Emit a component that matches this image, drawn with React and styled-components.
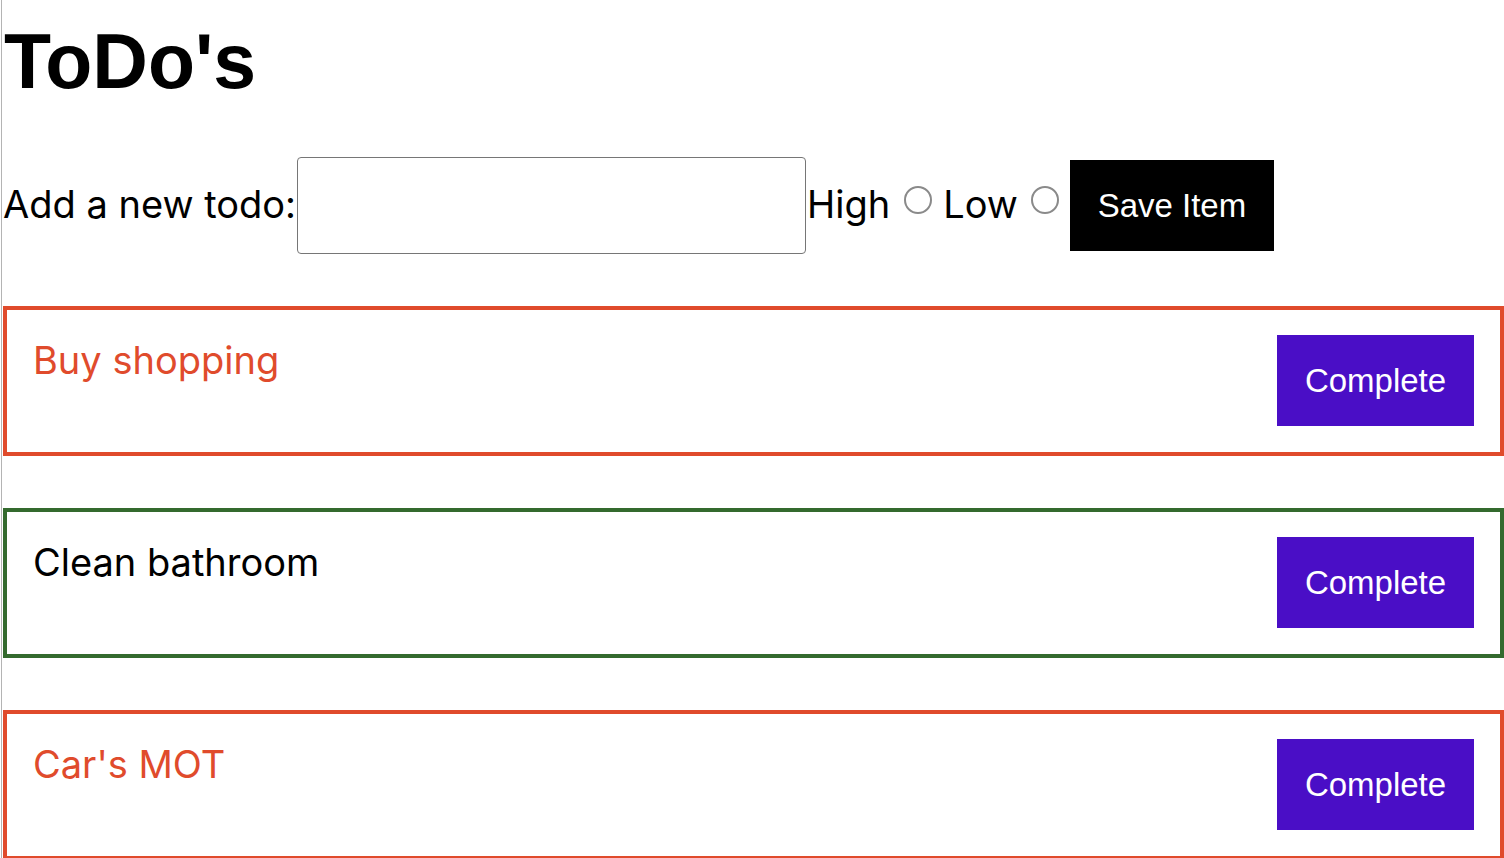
import React, { useState } from "react";
import styled, { createGlobalStyle } from "styled-components";

const GlobalStyle = createGlobalStyle`
  html, body {
    margin: 0;
    padding: 0;
    background: #ffffff;
  }
  body {
    font-family: Inter, "Noto Sans", sans-serif;
    color: #000000;
    overflow: hidden;
  }
`;

const Page = styled.div`
  min-height: 858px;
  margin-left: 1px;
  border-left: 1px solid #b4b4b4;
  padding-left: 1px;
  display: flex;
  flex-direction: column;
`;

const Title = styled.h1`
  margin: 16px 0 0 0;
  height: 90px;
  line-height: 90px;
  padding-left: 1px;
  font-family: "Liberation Sans", Arial, sans-serif;
  font-weight: 700;
  font-size: 77px;
`;

const Form = styled.form`
  display: flex;
  align-items: center;
  margin-top: 51px;
  height: 97px;
`;

const Label = styled.label`
  font-size: 38px;
  line-height: 1;
  margin-top: -4px;
`;

const TextInput = styled.input`
  box-sizing: border-box;
  width: 509px;
  height: 97px;
  margin: 0 1px;
  border: 1px solid #767676;
  border-radius: 4px;
  font-size: 32px;
  padding: 0 10px;
  outline: none;
`;

const Radio = styled.input.attrs({ type: "radio" })`
  appearance: none;
  box-sizing: border-box;
  width: 28px;
  height: 28px;
  margin: 29px ${(p) => p.$after}px 0 ${(p) => p.$before}px;
  align-self: flex-start;
  border: 2px solid #8a8a8a;
  border-radius: 50%;
  background: #ffffff;
`;

const SaveButton = styled.button`
  width: 204px;
  height: 91px;
  border: none;
  background: #000000;
  color: #ffffff;
  font-family: "Liberation Sans", Arial, sans-serif;
  font-size: 33px;
  padding: 0;
`;

const List = styled.div`
  display: flex;
  flex-direction: column;
  gap: 52px;
  margin-top: 52px;
`;

const Card = styled.div`
  box-sizing: border-box;
  height: 150px;
  border: 4px solid ${(p) => p.$border};
  padding: 25px 26px;
  display: flex;
  justify-content: space-between;
  align-items: flex-start;
`;

const ItemText = styled.span`
  font-size: 38px;
  color: ${(p) => p.$color};
  line-height: 50px;
`;

const CompleteButton = styled.button`
  width: 197px;
  height: 91px;
  border: none;
  background: #4a0ec6;
  color: #ffffff;
  font-family: "Liberation Sans", Arial, sans-serif;
  font-size: 33px;
  padding: 0;
`;

const todos = [
  { id: 1, text: "Buy shopping", priority: "high" },
  { id: 2, text: "Clean bathroom", priority: "low" },
  { id: 3, text: "Car's MOT", priority: "high" },
];

const priorityStyle = {
  high: { border: "#e04b2c", color: "#e04b2c" },
  low: { border: "#346a2e", color: "#000000" },
};

export default function App() {
  const [value, setValue] = useState("");

  return (
    <>
      <GlobalStyle />
      <Page>
        <Title>ToDo's</Title>
        <Form onSubmit={(e) => e.preventDefault()}>
          <Label htmlFor="todo">Add a new todo:</Label>
          <TextInput id="todo" value={value} onChange={(e) => setValue(e.target.value)} />
          <Label>High</Label>
          <Radio name="priority" value="high" $before={14} $after={11} />
          <Label>Low</Label>
          <Radio name="priority" value="low" $before={13} $after={11} />
          <SaveButton type="submit">Save Item</SaveButton>
        </Form>
        <List>
          {todos.map((todo) => (
            <Card key={todo.id} $border={priorityStyle[todo.priority].border}>
              <ItemText $color={priorityStyle[todo.priority].color}>{todo.text}</ItemText>
              <CompleteButton>Complete</CompleteButton>
            </Card>
          ))}
        </List>
      </Page>
    </>
  );
}
